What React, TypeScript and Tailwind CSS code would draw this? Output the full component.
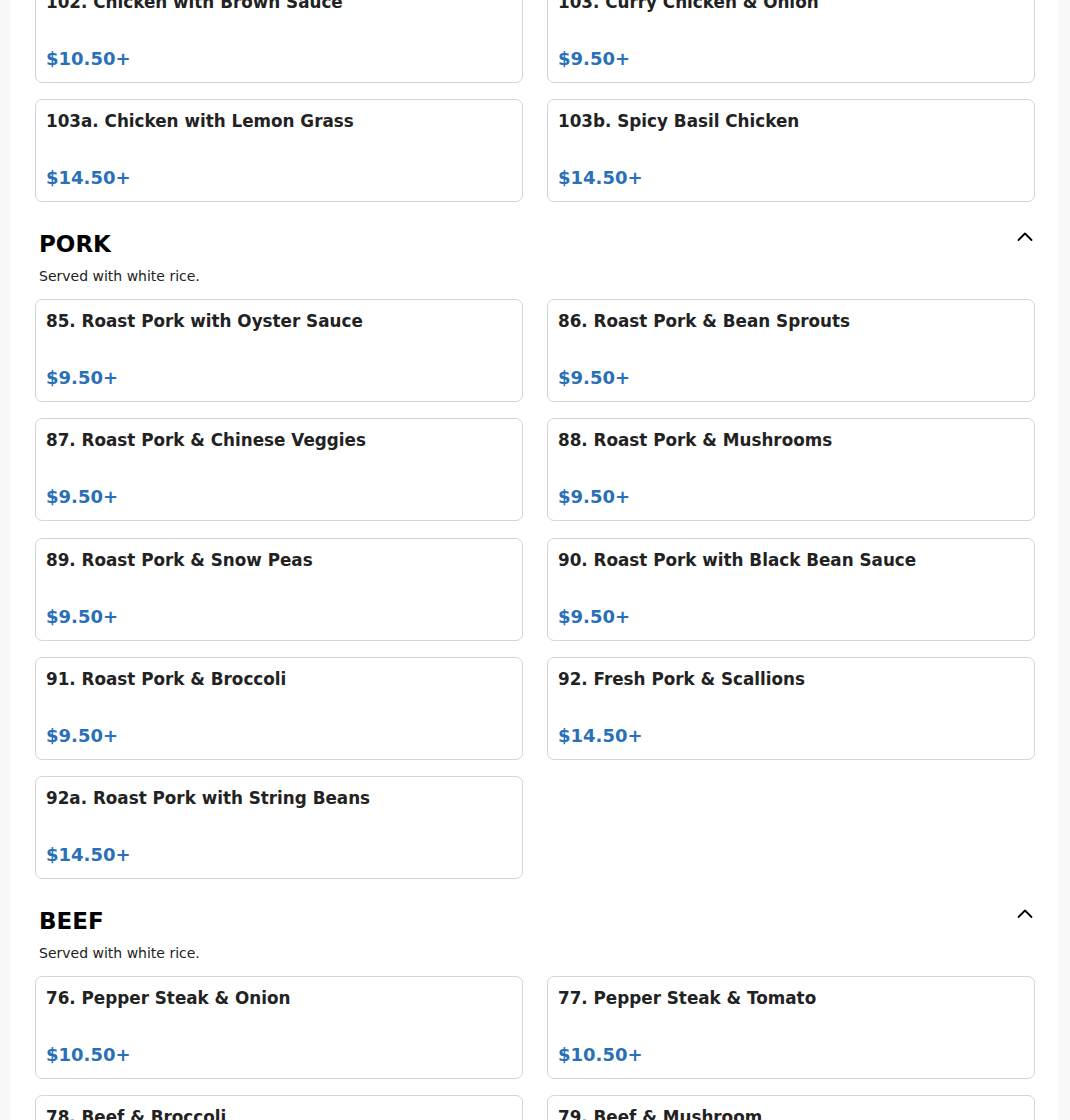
const sections = [
  {
    name: null as string | null,
    items: [
      { name: '102. Chicken with Brown Sauce', price: '$10.50+' },
      { name: '103. Curry Chicken & Onion', price: '$9.50+' },
      { name: '103a. Chicken with Lemon Grass', price: '$14.50+' },
      { name: '103b. Spicy Basil Chicken', price: '$14.50+' },
    ],
  },
  {
    name: 'PORK',
    items: [
      { name: '85. Roast Pork with Oyster Sauce', price: '$9.50+' },
      { name: '86. Roast Pork & Bean Sprouts', price: '$9.50+' },
      { name: '87. Roast Pork & Chinese Veggies', price: '$9.50+' },
      { name: '88. Roast Pork & Mushrooms', price: '$9.50+' },
      { name: '89. Roast Pork & Snow Peas', price: '$9.50+' },
      { name: '90. Roast Pork with Black Bean Sauce', price: '$9.50+' },
      { name: '91. Roast Pork & Broccoli', price: '$9.50+' },
      { name: '92. Fresh Pork & Scallions', price: '$14.50+' },
      { name: '92a. Roast Pork with String Beans', price: '$14.50+' },
    ],
  },
  {
    name: 'BEEF',
    items: [
      { name: '76. Pepper Steak & Onion', price: '$10.50+' },
      { name: '77. Pepper Steak & Tomato', price: '$10.50+' },
      { name: '78. Beef & Broccoli', price: '$10.50+' },
      { name: '79. Beef & Mushroom', price: '$10.50+' },
    ],
  },
]

function ItemCard({ name, price }: { name: string; price: string }) {
  return (
    <div className="flex flex-col rounded-[7px] border border-[#d4d4d4] bg-white px-[10px] pt-[9px] pb-[11px]">
      <h4 className="text-[16.8px] font-bold leading-6 text-[#222]">{name}</h4>
      <p className="mt-[33px] text-[18px] font-bold leading-6 text-[#2a70b8]">{price}</p>
    </div>
  )
}

export default function App() {
  return (
    <div
      className="min-h-screen bg-[#f8f8f8]"
      style={{ fontFamily: '"DejaVu Sans", sans-serif' }}
    >
      <div className="mx-[11px] bg-white px-6 pb-10">
        {sections.map((sec, i) => (
          <section key={i} className={sec.name ? 'mt-[18px]' : ''}>
            {sec.name && (
              <div className="px-1 pb-[13px]">
                <div className="flex items-start justify-between">
                  <h3 className="mt-[14px] text-[23px] font-bold leading-[20px] text-black">{sec.name}</h3>
                  <svg className="mr-[-2px] mt-[9px] h-4 w-4 text-black" viewBox="0 0 16 16" fill="none" stroke="currentColor" strokeWidth={1.8} strokeLinecap="round" strokeLinejoin="round">
                    <path d="M1.5 11L8 4.5l6.5 6.5" />
                  </svg>
                </div>
                <p className="mt-[12px] text-[14px] leading-5 text-[#222]">Served with white rice.</p>
              </div>
            )}
            <div className={`grid grid-cols-2 gap-x-6 gap-y-[16.2px] ${sec.name ? '' : '-mt-[20px]'}`}>
              {sec.items.map((it) => (
                <ItemCard key={it.name} name={it.name} price={it.price} />
              ))}
            </div>
          </section>
        ))}
      </div>
    </div>
  )
}
